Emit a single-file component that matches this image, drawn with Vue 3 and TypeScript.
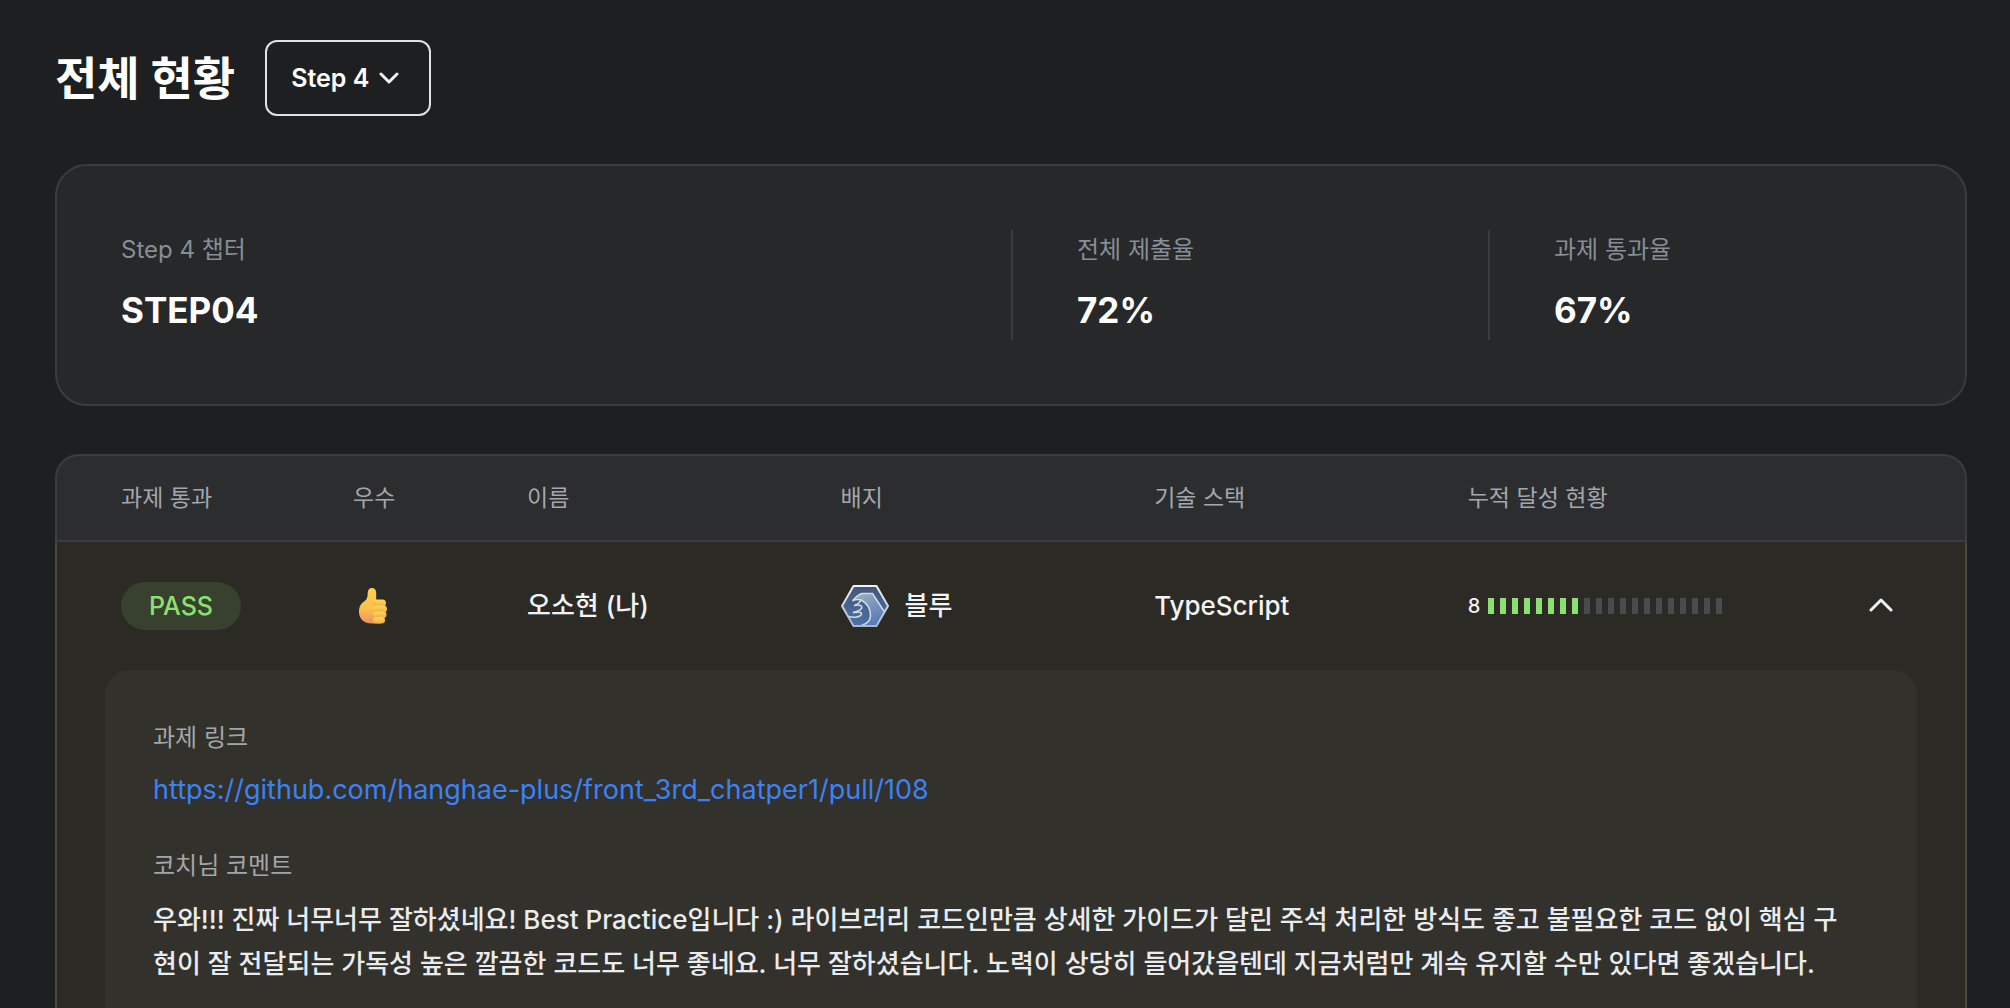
<script setup lang="ts">
import { ref } from 'vue'

interface Stat {
  label: string
  value: string
}

const steps: string[] = ['Step 1', 'Step 2', 'Step 3', 'Step 4']
const step = ref('Step 4')
const open = ref(true)

const stats: Stat[] = [
  { label: 'Step 4 챕터', value: 'STEP04' },
  { label: '전체 제출율', value: '72%' },
  { label: '과제 통과율', value: '67%' },
]

const columns: string[] = ['과제 통과', '우수', '이름', '배지', '기술 스택', '누적 달성 현황']

const achieved = 8
const total = 20
const link = 'https://github.com/hanghae-plus/front_3rd_chatper1/pull/108'
const comment =
  '우와!!! 진짜 너무너무 잘하셨네요! Best Practice입니다 :) 라이브러리 코드인만큼 상세한 가이드가 달린 주석 처리한 방식도 좋고 불필요한 코드 없이 핵심 구현이 잘 전달되는 가독성 높은 깔끔한 코드도 너무 좋네요. 너무 잘하셨습니다. 노력이 상당히 들어갔을텐데 지금처럼만 계속 유지할 수만 있다면 좋겠습니다.'
</script>

<template>
  <main class="page">
    <header class="top">
      <h1 class="title">전체 현황</h1>
      <div class="picker">
        <select v-model="step" class="picker-select" aria-label="Step">
          <option v-for="s in steps" :key="s" :value="s">{{ s }}</option>
        </select>
        <svg class="picker-icon" viewBox="0 0 20 12" aria-hidden="true">
          <path d="M2 2l8 8 8-8" />
        </svg>
      </div>
    </header>

    <dl class="summary">
      <div v-for="s in stats" :key="s.label" class="stat">
        <dt>{{ s.label }}</dt>
        <dd>{{ s.value }}</dd>
      </div>
    </dl>

    <table class="board">
      <colgroup>
        <col class="col-pass" />
        <col class="col-best" />
        <col class="col-main" />
        <col class="col-main" />
        <col class="col-main" />
        <col class="col-main" />
        <col />
      </colgroup>
      <thead>
        <tr>
          <th v-for="c in columns" :key="c" scope="col">{{ c }}</th>
          <td></td>
        </tr>
      </thead>
      <tbody>
        <tr class="member">
          <td><span class="pass">PASS</span></td>
          <td>
            <svg class="thumb" viewBox="0 0 40 40" role="img" aria-label="우수">
              <defs>
                <linearGradient id="hand" x1="0" y1="0" x2="0" y2="1">
                  <stop offset="0" stop-color="#ffd24d" />
                  <stop offset="0.6" stop-color="#fbc04a" />
                  <stop offset="1" stop-color="#e98f62" />
                </linearGradient>
                <linearGradient id="finger" x1="0" y1="0" x2="0" y2="1">
                  <stop offset="0" stop-color="#ffd95a" />
                  <stop offset="1" stop-color="#f0ab42" />
                </linearGradient>
              </defs>
              <path
                d="M19 2c2.800 0 4.200 2 4.200 5v7l6 1v22c-2 .5-5 .7-10 .5-5 0-8.700-1.500-11-4.500C6.500 30.500 6 28 6 25c0-4.500 2-7.500 5-9.500 2.500-1.500 3.700-3.500 3.700-8.500 0-3 1.500-5 4.300-5z"
                fill="url(#hand)"
              />
              <rect x="20" y="13.500" width="13" height="7.500" rx="3.700" fill="url(#finger)" />
              <rect x="20" y="19.500" width="14" height="7" rx="3.500" fill="url(#finger)" />
              <rect x="20" y="25.500" width="13.500" height="6.500" rx="3.200" fill="url(#finger)" />
              <rect x="20" y="31" width="12" height="6.500" rx="3.200" fill="url(#finger)" />
            </svg>
          </td>
          <td>오소현 (나)</td>
          <td>
            <span class="badge">
              <svg class="badge-icon" viewBox="0 0 48 42" aria-hidden="true">
                <defs>
                  <linearGradient id="rim" x1="0" y1="0" x2="0" y2="1">
                    <stop offset="0" stop-color="#f0f4f8" />
                    <stop offset="1" stop-color="#a9b6c6" />
                  </linearGradient>
                  <linearGradient id="wave" x1="0" y1="0" x2="0.400" y2="1">
                    <stop offset="0" stop-color="#9db0bd" />
                    <stop offset="1" stop-color="#587db8" />
                  </linearGradient>
                  <linearGradient id="sea" x1="0" y1="0" x2="0" y2="1">
                    <stop offset="0" stop-color="#43577a" />
                    <stop offset="1" stop-color="#4c70a8" />
                  </linearGradient>
                </defs>
                <path d="M12.500 1h23L47 21 35.500 41h-23L1 21z" fill="url(#sea)" />
                <path
                  d="M12 15.500c2-3 5-5.500 9-7h10.500l12 18.500L35.500 41H19c6-1.500 10-5 10-10.500C29 24 26 18 20 15c-3-.7-5.500-.5-8 .5z"
                  fill="url(#wave)"
                />
                <g
                  fill="none"
                  stroke="#d3dbe4"
                  stroke-width="1.500"
                  stroke-linecap="round"
                  stroke-linejoin="round"
                >
                  <path d="M12 15.500c2-3 5-5.500 9-7h10.500l12 18.500" />
                  <path d="M12 15.500c2.500-1 5-1.200 8-.5 6 3 9.500 9 9.500 15.500 0 5-4 8.500-9 10" />
                  <path d="M20 15c-1.500 3-3.500 4.500-6.500 5.500 5-1.500 8.500.5 7 3-1.300 2-4 2.500-8 4" />
                  <path d="M12.500 27.500c5-.5 8.500-.5 8 1.500-1 3-7 4-13 2.500" />
                </g>
                <path
                  d="M12.500 1h23L47 21 35.500 41h-23L1 21z"
                  fill="none"
                  stroke="url(#rim)"
                  stroke-width="2"
                  stroke-linejoin="round"
                />
              </svg>
              블루
            </span>
          </td>
          <td>TypeScript</td>
          <td>
            <span class="progress">
              <span class="count">{{ achieved }}</span>
              <span class="bars">
                <i v-for="n in total" :key="n" :class="['bar', { on: n <= achieved }]"></i>
              </span>
            </span>
          </td>
          <td>
            <button
              class="toggle"
              type="button"
              :aria-expanded="open"
              aria-label="상세 보기"
              @click="open = !open"
            >
              <svg :class="['toggle-icon', { closed: !open }]" viewBox="0 0 24 16" aria-hidden="true">
                <path d="M2 12l10-10 10 10" />
              </svg>
            </button>
          </td>
        </tr>
        <tr v-if="open" class="detail">
          <td colspan="7">
            <div class="panel">
              <section>
                <h2>과제 링크</h2>
                <a :href="link">{{ link }}</a>
              </section>
              <section>
                <h2>코치님 코멘트</h2>
                <p>{{ comment }}</p>
              </section>
            </div>
          </td>
        </tr>
      </tbody>
    </table>
  </main>
</template>

<style>
body {
  margin: 0;
  background: #1e1f21;
}
</style>

<style scoped>
.page {
  box-sizing: border-box;
  height: 100vh;
  overflow: hidden;
  padding: 40px 43px 0 55px;
  background: #1e1f21;
  color: #f1f3f5;
  font-family: Inter, 'Noto Sans CJK KR', sans-serif;
  font-size: 26px;
  line-height: 44px;
}

.top {
  display: flex;
  align-items: center;
  gap: 30px;
}

.title {
  margin: 0;
  color: #fff;
  font-size: 46px;
  font-weight: 700;
  line-height: 64px;
}

.picker {
  display: grid;
  align-items: center;
}

.picker-select,
.picker-icon {
  grid-area: 1 / 1;
}

.picker-select {
  appearance: none;
  box-sizing: border-box;
  width: 166px;
  height: 76px;
  padding: 0 24px;
  border: 2px solid #dee2e6;
  border-radius: 12px;
  background: transparent;
  color: #fff;
  font: inherit;
  font-size: 25px;
  font-weight: 600;
}

.picker-icon {
  justify-self: end;
  width: 20px;
  height: 12px;
  margin-right: 32px;
  pointer-events: none;
}

.picker-icon path,
.toggle-icon path {
  fill: none;
  stroke: #f1f3f5;
  stroke-width: 3;
  stroke-linecap: round;
  stroke-linejoin: round;
}

.summary {
  display: grid;
  grid-template-columns: 2fr 1fr 1fr;
  margin: 48px 0;
  padding: 64px 0;
  border: 2px solid #3b3c3e;
  border-radius: 32px;
  background: #27282a;
}

.stat {
  height: 110px;
  padding-left: 64px;
}

.stat + .stat {
  border-left: 2px solid #3b3c3e;
}

.stat dt {
  color: #868e96;
  font-size: 24px;
  line-height: 40px;
}

.stat dd {
  margin: 12px 0 0;
  color: #fff;
  font-size: 35px;
  font-weight: 700;
  line-height: 56px;
}

.board {
  width: 100%;
  border-spacing: 0;
  table-layout: fixed;
}

.col-pass {
  width: 298px;
}

.col-best {
  width: 174px;
}

.col-main {
  width: 16.4%;
}

.board th,
.board td {
  padding: 0;
  text-align: left;
}

.board tr > :first-child {
  padding-left: 64px;
}

.board thead th,
.board thead td {
  height: 84px;
  border: 0 solid #3b3c3e;
  border-width: 2px 0;
  background: #2c2d2f;
  color: #a1a7ad;
  font-size: 23px;
  font-weight: 400;
  line-height: 32px;
}

.board thead tr > :first-child {
  border-left-width: 2px;
  border-top-left-radius: 24px;
}

.board thead tr > :last-child {
  border-right-width: 2px;
  border-top-right-radius: 24px;
}

.board tbody td {
  border: 0 solid #4c4937;
  background: #2b2a25;
}

.board tbody tr > :first-child {
  border-left-width: 2px;
}

.board tbody tr > :last-child {
  border-right-width: 2px;
}

.member td {
  height: 128px;
  font-weight: 500;
  line-height: 40px;
}

.pass {
  display: inline-block;
  width: 120px;
  border-radius: 24px;
  background: #37412d;
  color: #8ce071;
  font-size: 25px;
  line-height: 48px;
  text-align: center;
}

.thumb {
  display: block;
  width: 40px;
  height: 40px;
}

.badge,
.progress {
  display: flex;
  align-items: center;
}

.badge {
  gap: 16px;
}

.badge-icon {
  width: 48px;
  height: 42px;
}

.progress {
  gap: 8px;
}

.count {
  font-size: 20px;
}

.bars {
  display: flex;
  gap: 6px;
}

.bar {
  width: 6px;
  height: 16px;
  background: #494b4f;
}

.bar.on {
  background: #8ce071;
}

.toggle {
  display: flex;
  align-items: center;
  justify-content: center;
  width: 48px;
  height: 48px;
  margin: 0 60px 0 auto;
  padding: 0;
  border: 0;
  background: none;
  cursor: pointer;
}

.toggle-icon {
  width: 24px;
  height: 16px;
}

.toggle-icon.closed {
  transform: rotate(180deg);
}

.board .detail td {
  padding: 0 48px 48px;
}

.panel {
  display: flex;
  flex-direction: column;
  gap: 36px;
  padding: 48px 60px 48px 48px;
  border-radius: 24px;
  background: #32312c;
}

.panel h2 {
  margin: 0 0 12px;
  color: #a1a7a8;
  font-size: 24px;
  font-weight: 400;
  line-height: 40px;
}

.panel a {
  display: block;
  color: #3b82f6;
  font-size: 27px;
  line-height: 40px;
  text-decoration: none;
}

.panel p {
  margin: 0;
  color: #e9ecef;
  font-weight: 500;
}
</style>
